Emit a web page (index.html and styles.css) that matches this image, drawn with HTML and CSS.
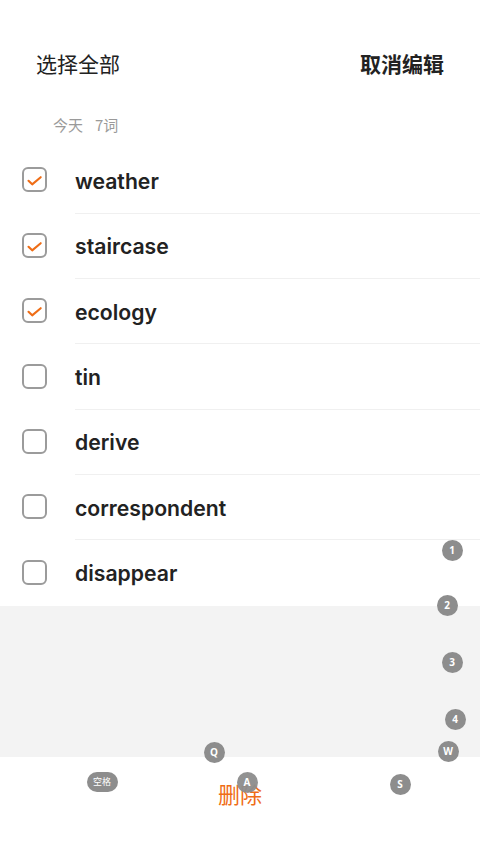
FILE: index.html
```html
<!DOCTYPE html>
<html lang="zh">
<head>
<meta charset="utf-8">
<link rel="stylesheet" href="styles.css">
</head>
<body>
<div class="app">
  <header class="top">
    <span class="select-all">选择全部</span>
    <span class="cancel">取消编辑</span>
  </header>
  <div class="section"><span>今天</span><span>7词</span></div>
  <ul class="list">
    <li class="row"><span class="box on"><svg viewBox="0 0 20 20"><path d="M4.3 11.2L7.8 14.6L15.9 7.8"/></svg></span><span class="word">weather</span></li>
    <li class="row"><span class="box on"><svg viewBox="0 0 20 20"><path d="M4.3 11.2L7.8 14.6L15.9 7.8"/></svg></span><span class="word">staircase</span></li>
    <li class="row"><span class="box on"><svg viewBox="0 0 20 20"><path d="M4.3 11.2L7.8 14.6L15.9 7.8"/></svg></span><span class="word">ecology</span></li>
    <li class="row"><span class="box"></span><span class="word">tin</span></li>
    <li class="row"><span class="box"></span><span class="word">derive</span></li>
    <li class="row"><span class="box"></span><span class="word">correspondent</span></li>
    <li class="row"><span class="box"></span><span class="word">disappear</span></li>
  </ul>
  <div class="blank"></div>
  <footer class="bottom"><span class="delete">删除</span></footer>

  <span class="key k1">1</span>
  <span class="key k2">2</span>
  <span class="key k3">3</span>
  <span class="key k4">4</span>
  <span class="key kw">W</span>
  <span class="key kq">Q</span>
  <span class="key ka">A</span>
  <span class="key ks">S</span>
  <span class="key kspace">空格</span>
</div>
</body>
</html>
```
FILE: styles.css
```css
* { box-sizing: border-box; }
html, body { margin: 0; padding: 0; background: #fff; }
body { font-family: "Noto Sans CJK SC", "Noto Sans", sans-serif; }
.app { position: relative; width: 480px; height: 853px; overflow: hidden; display: flex; flex-direction: column; }
.top { display: flex; justify-content: space-between; align-items: center; height: 104px; padding: 48px 36px 26px 36px; }
.top span { font-size: 21px; line-height: 30px; color: #222; }
.select-all { font-weight: 400; }
.cancel { font-weight: 700; color: #1a1a1a; }
.section { height: 44.3px; padding: 10px 0 0 53px; font-size: 15px; line-height: 21px; color: #9a9a9a; display: flex; gap: 12px; }
.list { list-style: none; margin: 0; padding: 0; }
.row { position: relative; height: 65.35px; display: flex; align-items: center; }
.row::after { content: ""; position: absolute; left: 75px; right: 0; bottom: 0; height: 1px; background: #f0f0f0; }
.row:last-child::after { display: none; }
.box { width: 25px; height: 25px; margin: -2px 28px 0 22px; border: 2px solid #9b9b9b; border-radius: 6px; display: flex; align-items: center; justify-content: center; flex-shrink: 0; }
.box svg { width: 21px; height: 21px; }
.box path { fill: none; stroke: #ef6d16; stroke-width: 2; stroke-linecap: round; stroke-linejoin: round; }
.word { font-family: Inter, "Noto Sans", sans-serif; font-weight: 600; font-size: 21.2px; color: #222; }
.blank { height: 151px; background: #f3f3f3; flex-shrink: 0; }
.bottom { flex: 1; display: flex; justify-content: center; padding-top: 20px; }
.delete { font-size: 22px; line-height: 32px; color: #ef6d16; }
.key { position: absolute; width: 21px; height: 21px; margin: -10.5px 0 0 -10.5px; border-radius: 50%; background: #8d8d8d; color: #fff; font-family: "Open Sans", "Noto Sans", sans-serif; font-weight: 700; font-size: 10px; line-height: 21px; text-align: center; }
.k1 { left: 452px; top: 550px; }
.k2 { left: 447px; top: 605px; }
.k3 { left: 452px; top: 662px; }
.k4 { left: 455px; top: 719px; }
.kw { left: 448px; top: 751px; }
.kq { left: 214px; top: 752px; }
.ka { left: 247px; top: 782px; opacity: 0.95; }
.ks { left: 400px; top: 784px; }
.kspace { left: 102px; top: 782px; width: 31px; height: 20px; margin: -10px 0 0 -15.5px; border-radius: 10px; line-height: 20px; font-size: 9px; font-weight: 400; font-family: "Noto Sans CJK SC", sans-serif; }
```
